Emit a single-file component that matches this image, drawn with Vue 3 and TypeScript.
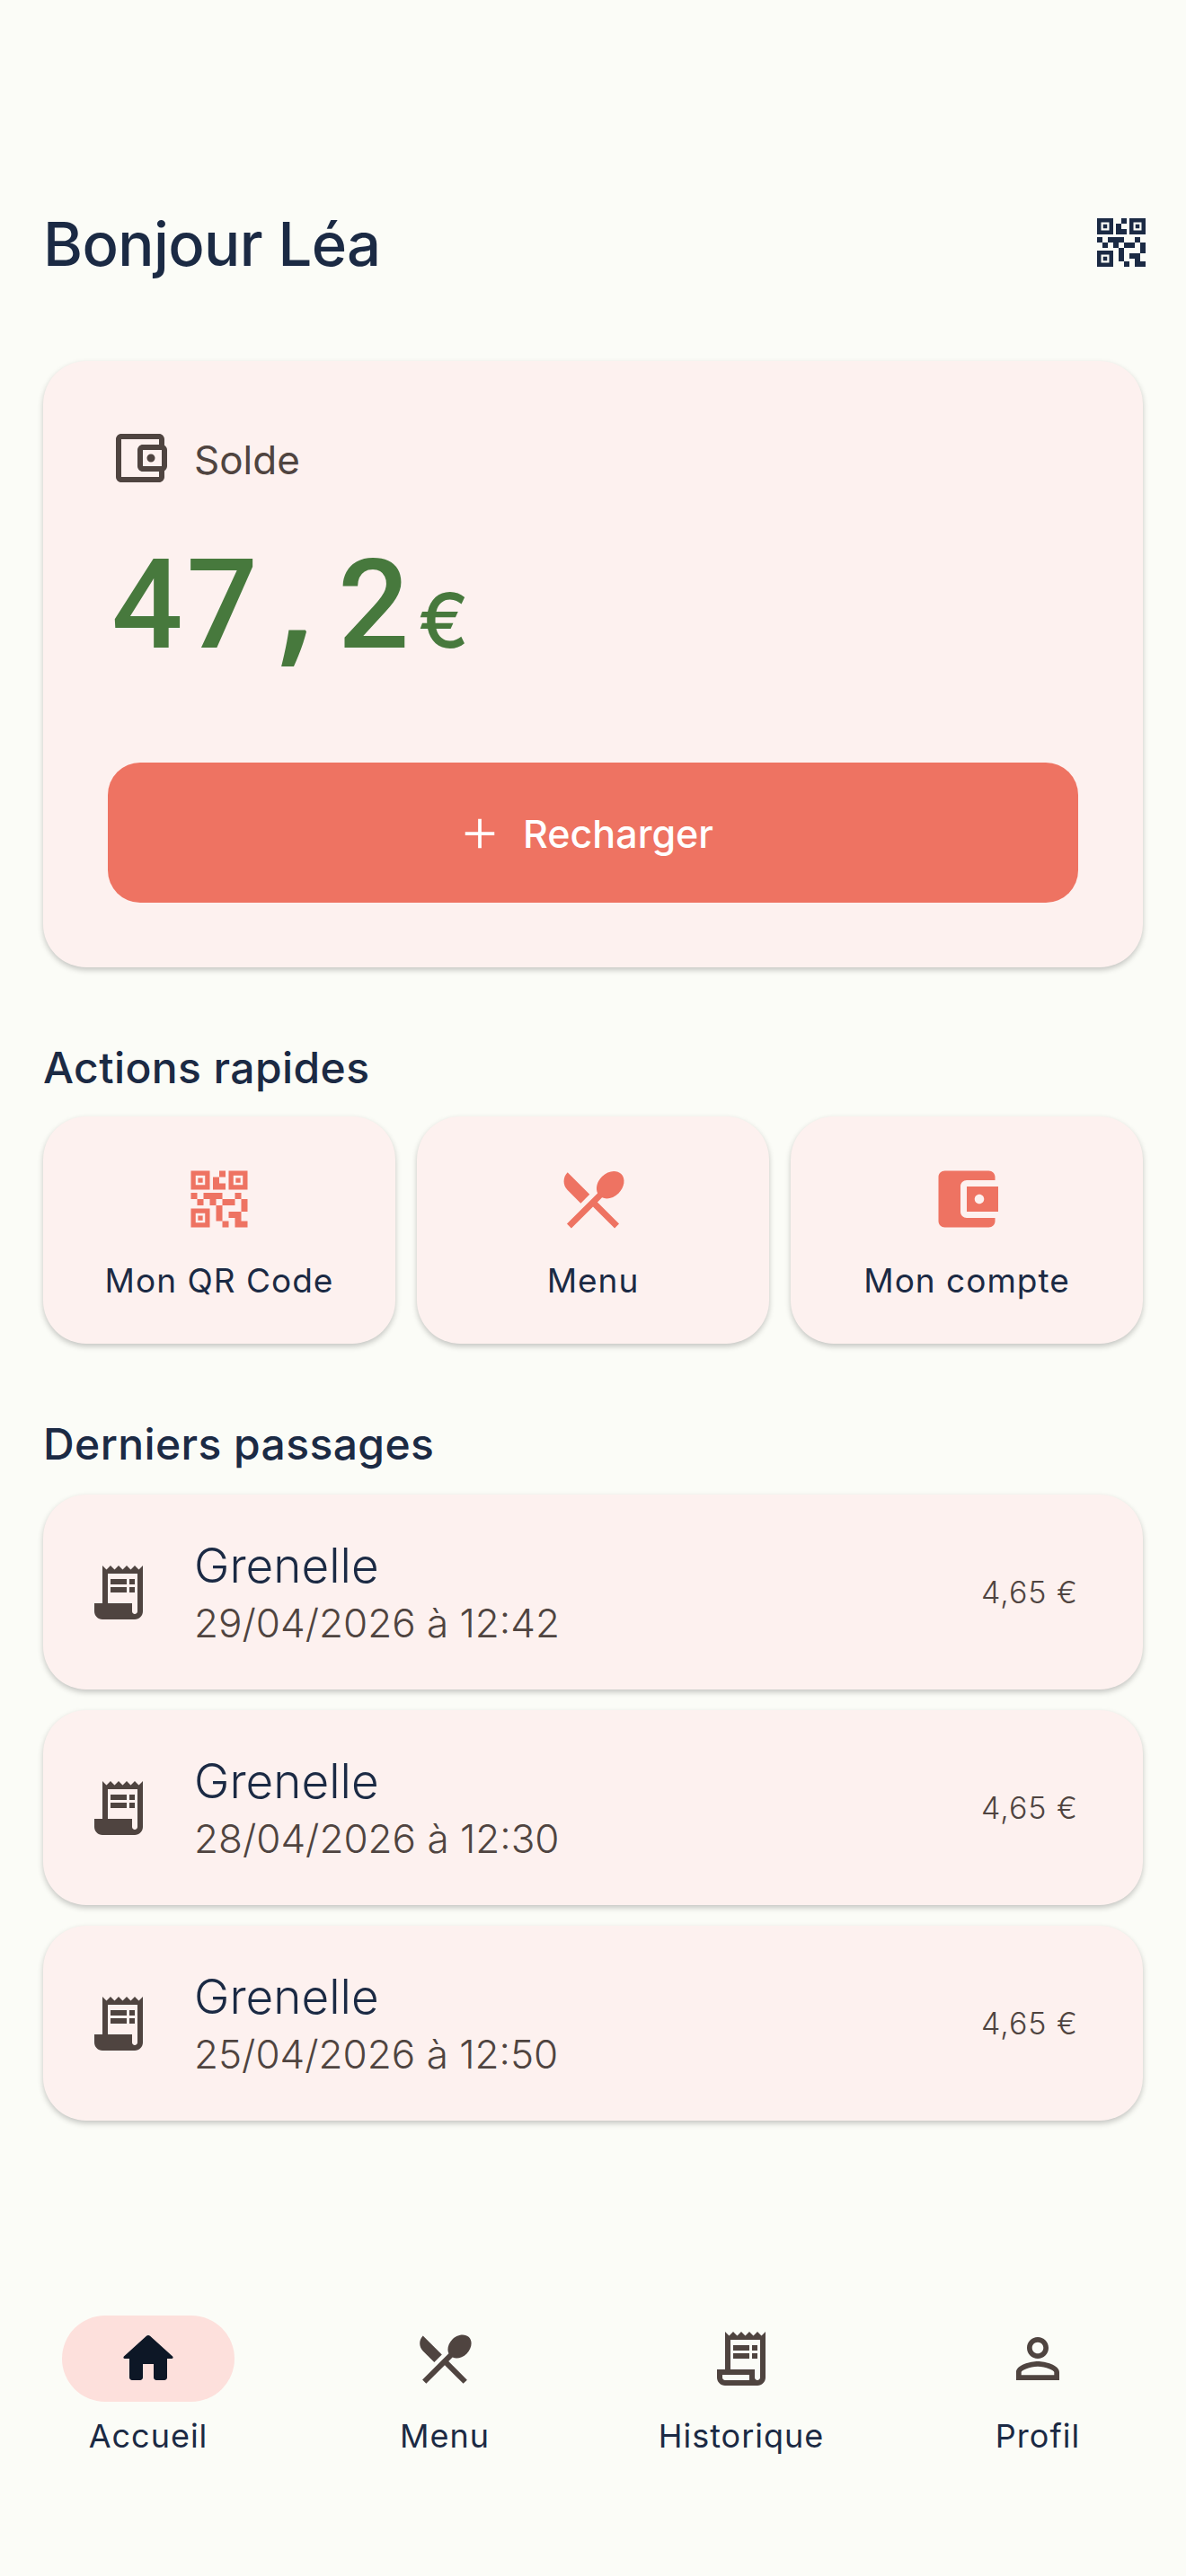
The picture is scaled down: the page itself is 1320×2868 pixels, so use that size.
<script setup lang="ts">
const qr = "M15,21h-2v-2h2V21z M13,14h-2v5h2V14z M21,12h-2v4h2V12z M19,10h-2v2h2V10z M7,12H5v2h2V12z M5,10H3v2h2V10z M12,5h2V3h-2V5z M4.5,4.5v3h3v-3H4.5z M9,9H3V3h6V9z M4.5,16.5v3h3v-3H4.5z M9,21H3v-6h6V21z M16.5,4.5v3h3v-3H16.5z M21,9h-6V3h6V9z M19,19v-3l-4,0v2h2v3h4v-2H19z M17,12l-4,0v2h4V12z M13,10H7v2h2v2h2v-2h2V10z M14,9V7h-2V5h-2v4L14,9z M6.75,5.25h-1.5v1.5h1.5V5.25z M6.75,17.25h-1.5v1.5h1.5V17.25z M18.75,5.25h-1.5v1.5h1.5V5.25z"
const wallet = "M21 7.28V5c0-1.1-.9-2-2-2H5c-1.11 0-2 .9-2 2v14c0 1.1.89 2 2 2h14c1.1 0 2-.9 2-2v-2.28c.59-.35 1-.98 1-1.72V9c0-.74-.41-1.38-1-1.72zM20 9v6h-7V9h7zM5 19V5h14v2h-6c-1.1 0-2 .9-2 2v6c0 1.1.9 2 2 2h6v2H5z M16 10.5a1.5 1.5 0 1 0 0 3a1.5 1.5 0 1 0 0-3z"
const walletFilled = "M21 18v1c0 1.1-.9 2-2 2H5c-1.11 0-2-.9-2-2V5c0-1.1.89-2 2-2h14c1.1 0 2 .9 2 2v1h-9c-1.11 0-2 .9-2 2v8c0 1.1.89 2 2 2h9zm-9-2h10V8H12v8zm4-2.5c-.83 0-1.5-.67-1.5-1.5s.67-1.5 1.5-1.5 1.5.67 1.5 1.5-.67 1.5-1.5 1.5z"
const cutlery = "M8.1 13.34l2.83-2.83L3.91 3.5c-1.56 1.56-1.56 4.09 0 5.66l4.19 4.18zm6.78-1.81c1.53.71 3.68.21 5.27-1.38 1.91-1.91 2.28-4.65.81-6.12-1.46-1.46-4.2-1.1-6.12.81-1.59 1.59-2.09 3.74-1.38 5.27L3.7 19.87l1.41 1.41L12 14.41l6.88 6.88 1.41-1.41L13.41 13l1.47-1.47z"
const receiptFilled = "M19.5,3.5L18,2l-1.5,1.5L15,2l-1.5,1.5L12,2l-1.5,1.5L9,2L7.5,3.5L6,2v14H3v3c0,1.66,1.34,3,3,3h12c1.66,0,3-1.34,3-3V2L19.5,3.5z M19,19c0,0.55-0.45,1-1,1s-1-0.45-1-1v-3H8V5h11V19z M9 7h6v2H9z M16 7h2v2h-2z M9 10h6v2H9z M16 10h2v2h-2z"
const receipt = "M19.5 3.5L18 2l-1.5 1.5L15 2l-1.5 1.5L12 2l-1.5 1.5L9 2 7.5 3.5 6 2v14H3v3c0 1.66 1.34 3 3 3h12c1.66 0 3-1.34 3-3V2l-1.5 1.5zM15 20H6c-.55 0-1-.45-1-1v-1h10v2zm4-1c0 .55-.45 1-1 1s-1-.45-1-1v-3H8V5h11v14z M9 7h6v2H9z M16 7h2v2h-2z M9 10h6v2H9z M16 10h2v2h-2z"
const home = "M10 19v-5h4v5c0 .55.45 1 1 1h3c.55 0 1-.45 1-1v-7h1.7c.46 0 .68-.57.33-.87L12.67 3.6c-.38-.34-.96-.34-1.34 0l-8.36 7.53c-.34.3-.13.87.33.87H5v7c0 .55.45 1 1 1h3c.55 0 1-.45 1-1z"
const person = "M12 5.9c1.16 0 2.1.94 2.1 2.1s-.94 2.1-2.1 2.1S9.9 9.16 9.9 8s.94-2.1 2.1-2.1m0 9c2.97 0 6.1 1.46 6.1 2.1v1.1H5.9V17c0-.64 3.13-2.1 6.1-2.1M12 4C9.79 4 8 5.79 8 8s1.79 4 4 4 4-1.79 4-4-1.79-4-4-4zm0 9c-2.67 0-8 1.34-8 4v3h16v-3c0-2.66-5.33-4-8-4z"

const actions = [
  { label: "Mon QR Code", icon: qr },
  { label: "Menu", icon: cutlery },
  { label: "Mon compte", icon: walletFilled },
]
const visits = [
  { place: "Grenelle", date: "29/04/2026 à 12:42", amount: "4,65 €" },
  { place: "Grenelle", date: "28/04/2026 à 12:30", amount: "4,65 €" },
  { place: "Grenelle", date: "25/04/2026 à 12:50", amount: "4,65 €" },
]
const tabs = [
  { label: "Accueil", icon: home, active: true },
  { label: "Menu", icon: cutlery, active: false },
  { label: "Historique", icon: receipt, active: false },
  { label: "Profil", icon: person, active: false },
]
</script>

<template>
  <div class="page">
    <main class="content">
      <header class="top">
        <h1>Bonjour Léa</h1>
        <svg class="icon" viewBox="0 0 24 24"><path :d="qr" /></svg>
      </header>

      <section class="balance-card">
        <div class="balance-label">
          <svg class="icon" viewBox="0 0 24 24"><path :d="wallet" /></svg>
          <span>Solde</span>
        </div>
        <div class="balance">
          <span class="amount">47<span class="comma">,</span>2</span>
          <span class="currency">€</span>
        </div>
        <button class="reload">
          <svg class="plus" viewBox="0 0 24 24"><path d="M18.5 12.75h-5.75v5.75h-1.5v-5.75H5.5v-1.5h5.75V5.5h1.5v5.75h5.75z" /></svg>
          <span>Recharger</span>
        </button>
      </section>

      <h2 class="section-title first">Actions rapides</h2>
      <div class="actions">
        <div v-for="a in actions" :key="a.label" class="action">
          <svg class="action-icon" viewBox="0 0 24 24"><path :d="a.icon" /></svg>
          <span>{{ a.label }}</span>
        </div>
      </div>

      <h2 class="section-title second">Derniers passages</h2>
      <div class="visits">
        <div v-for="v in visits" :key="v.date" class="visit">
          <svg class="icon" viewBox="0 0 24 24"><path :d="receiptFilled" /></svg>
          <div class="visit-text">
            <div class="place">{{ v.place }}</div>
            <div class="date">{{ v.date }}</div>
          </div>
          <div class="price">{{ v.amount }}</div>
        </div>
      </div>
    </main>

    <nav class="tabs">
      <div v-for="t in tabs" :key="t.label" class="tab">
        <div class="pill" :class="{ active: t.active }">
          <svg class="icon" viewBox="0 0 24 24"><path :d="t.icon" /></svg>
        </div>
        <span>{{ t.label }}</span>
      </div>
    </nav>
  </div>
</template>

<style>
html,
body {
  margin: 0;
  background: #fbfcf7;
}
</style>

<style scoped>
.page {
  height: 2868px;
  display: flex;
  flex-direction: column;
  justify-content: space-between;
  background: #fbfcf7;
  font-family: Inter, "Open Sans", sans-serif;
  color: #1b2a44;
  overflow: hidden;
}
.content {
  padding: 234px 48px 0;
}
.icon {
  width: 72px;
  height: 72px;
  flex: none;
  fill: #4f4440;
}
.top {
  display: flex;
  justify-content: space-between;
  align-items: center;
  margin-right: -12px;
  margin-bottom: 96px;
}
.top .icon {
  fill: #1b2a44;
}
h1 {
  margin: 4px 0 0;
  font-size: 67px;
  line-height: 68px;
  font-weight: 500;
  letter-spacing: -0.6px;
}
.balance-card {
  height: 675px;
  box-sizing: border-box;
  padding: 72px;
  display: flex;
  flex-direction: column;
  background: #fdf1ef;
  border-radius: 48px;
  box-shadow: 0 3px 6px rgba(0, 0, 0, 0.22);
}
.balance-label {
  display: flex;
  align-items: center;
  gap: 24px;
  font-size: 44px;
  color: #4f4440;
}
.balance-label span {
  padding-top: 3px;
}
.balance {
  margin-top: 27px;
  display: flex;
  align-items: baseline;
  color: #47793d;
  line-height: 168px;
}
.amount {
  margin-left: 4px;
  font-family: Roboto, sans-serif;
  font-size: 140px;
  font-weight: 500;
  letter-spacing: 4px;
}
.comma {
  font-family: "Open Sans", sans-serif;
  font-size: 165px;
  font-weight: 600;
  margin: 0 20px 0 16px;
}
.currency {
  font-size: 84px;
  font-weight: 500;
  margin-left: 6px;
}
.reload {
  margin-top: auto;
  height: 156px;
  padding: 2px 22px 0 0;
  border: 0;
  border-radius: 36px;
  background: #ee7362;
  color: #fff;
  display: flex;
  align-items: center;
  justify-content: center;
  gap: 18px;
  font-family: inherit;
  font-size: 43px;
  font-weight: 500;
}
.plus {
  width: 60px;
  height: 60px;
  fill: #fff;
}
.section-title {
  margin: 0;
  font-size: 48px;
  line-height: 60px;
  font-weight: 500;
  letter-spacing: 0.4px;
}
.section-title.first {
  margin-top: 82px;
  margin-bottom: 24px;
}
.section-title.second {
  margin-top: 82px;
  margin-bottom: 26px;
}
.actions {
  display: grid;
  grid-template-columns: repeat(3, 1fr);
  gap: 24px;
}
.action {
  height: 253px;
  box-sizing: border-box;
  padding-top: 50px;
  display: flex;
  flex-direction: column;
  align-items: center;
  background: #fdf1ef;
  border-radius: 48px;
  box-shadow: 0 3px 6px rgba(0, 0, 0, 0.22);
  font-size: 37px;
  letter-spacing: 1px;
}
.action-icon {
  width: 84px;
  height: 84px;
  fill: #ee7362;
  margin-bottom: 26px;
}
.visits {
  display: flex;
  flex-direction: column;
  gap: 23px;
}
.visit {
  height: 217px;
  box-sizing: border-box;
  padding: 0 72px 0 48px;
  display: flex;
  align-items: center;
  background: #fdf1ef;
  border-radius: 48px;
  box-shadow: 0 3px 6px rgba(0, 0, 0, 0.22);
}
.visit-text {
  flex: 1;
  margin-left: 48px;
  padding-top: 4px;
}
.place {
  font-size: 53px;
  line-height: 64px;
  font-weight: 300;
}
.date {
  font-size: 44px;
  line-height: 64px;
  font-weight: 300;
  color: #4f4440;
}
.price {
  font-size: 34px;
  font-weight: 300;
  letter-spacing: 1px;
  color: #4f4440;
}
.tabs {
  display: grid;
  grid-template-columns: repeat(4, 1fr);
  padding-bottom: 132px;
}
.tab {
  display: flex;
  flex-direction: column;
  align-items: center;
  font-size: 36px;
  line-height: 48px;
  letter-spacing: 1px;
}
.pill {
  width: 192px;
  height: 96px;
  margin-bottom: 14px;
  display: flex;
  align-items: center;
  justify-content: center;
  border-radius: 48px;
}
.pill.active {
  background: #fde0dc;
}
.pill.active .icon {
  fill: #0d1726;
}
</style>
